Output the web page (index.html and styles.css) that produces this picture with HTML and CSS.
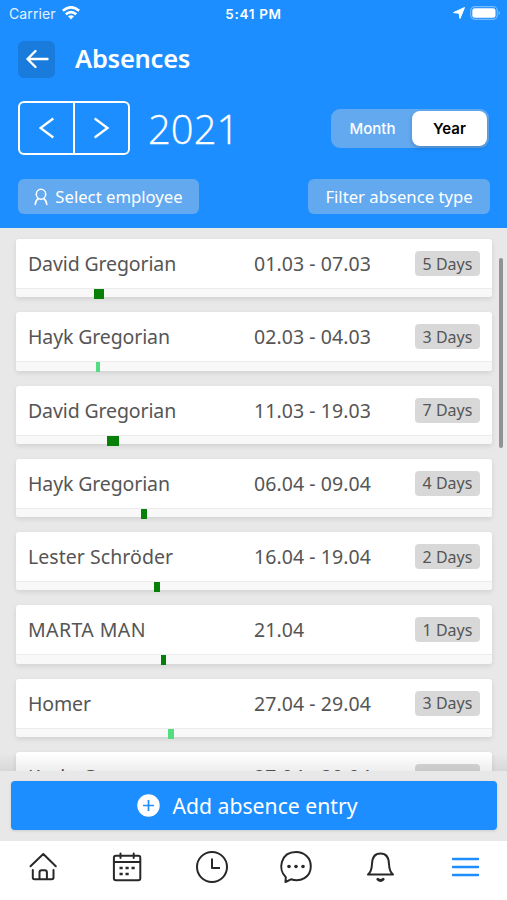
FILE: index.html
```
<!DOCTYPE html>
<html lang="en">
<head>
<meta charset="utf-8">
<title>Absences</title>
<link rel="stylesheet" href="styles.css">
</head>
<body>
<div class="app">
  <header class="header">
    <div class="status">
      <div class="status-left"><span class="carrier">Carrier</span>
        <svg width="18" height="14" viewBox="0 0 18 14" fill="none" stroke="#fff" stroke-width="2.700"><path d="M.8 4.800Q9-2.200 17.200 4.800M3.800 8.300Q9 3.900 14.200 8.300"/><path d="M6 10.300Q9 8 12 10.300L9 13.400Z" fill="#fff" stroke="none"/></svg>
      </div>
      <span class="time">5:41 PM</span>
      <div class="status-right">
        <svg width="12" height="12" viewBox="0 0 12 12"><path d="M11.500.5L7 11.500 6 6.200.5 5.600Z" fill="#fff" stroke="#fff" stroke-linejoin="round"/></svg>
        <svg width="31" height="14" viewBox="0 0 31 14"><rect x=".7" y=".7" width="26.600" height="12.600" rx="4" fill="none" stroke="#77b9ff" stroke-width="1.200"/><rect x="2.300" y="2.300" width="23.200" height="9.400" rx="2.500" fill="#fff"/><path d="M28.600 5q1.400.4 1.400 2t-1.400 2z" fill="#77b9ff"/></svg>
      </div>
    </div>
    <div class="title-row">
      <div class="back"><svg width="24" height="22" viewBox="0 0 24 22" fill="none" stroke="#fff" stroke-width="2.400" stroke-linecap="round" stroke-linejoin="round"><path d="M22.500 11H2.500M10.500 3L2.500 11l8 8"/></svg></div>
      <h1 class="title">Absences</h1>
    </div>
    <div class="period-row">
      <div class="stepper">
        <div class="step"><svg width="16" height="22" viewBox="0 0 16 22" fill="none" stroke="#fff" stroke-width="2.300"><path d="M14.300 1.500L1.500 11l12.800 9.500"/></svg></div>
        <div class="step"><svg width="16" height="22" viewBox="0 0 16 22" fill="none" stroke="#fff" stroke-width="2.300"><path d="M.7 1.500L13.500 11 .7 20.500"/></svg></div>
      </div>
      <span class="year">2021</span>
      <div class="segment"><span class="seg">Month</span><span class="seg seg-active">Year</span></div>
    </div>
    <div class="filter-row">
      <div class="chip chip-employee">
        <svg width="14" height="18" viewBox="0 0 14 18" fill="none" stroke="#fff" stroke-width="1.500" stroke-linecap="round"><ellipse cx="7" cy="6.200" rx="4.700" ry="5"/><path d="M1.200 16.500q.2-4.200 3.300-6M12.800 16.500q-.2-4.200-3.300-6"/></svg>
        <span class="chip-label">Select employee</span>
      </div>
      <div class="chip chip-type"><span class="chip-label">Filter absence type</span></div>
    </div>
  </header>

  <main class="list">
    <div class="card"><div class="entry"><span class="name">David Gregorian</span><span class="dates">01.03 - 07.03</span><span class="days">5 Days</span></div><div class="track"><i class="bar" style="margin-left:77.5px;width:10px"></i></div></div>
    <div class="card"><div class="entry"><span class="name">Hayk Gregorian</span><span class="dates">02.03 - 04.03</span><span class="days">3 Days</span></div><div class="track"><i class="bar bar-light" style="margin-left:79.5px;width:4.5px"></i></div></div>
    <div class="card"><div class="entry"><span class="name">David Gregorian</span><span class="dates">11.03 - 19.03</span><span class="days">7 Days</span></div><div class="track"><i class="bar" style="margin-left:91px;width:12px"></i></div></div>
    <div class="card"><div class="entry"><span class="name">Hayk Gregorian</span><span class="dates">06.04 - 09.04</span><span class="days">4 Days</span></div><div class="track"><i class="bar" style="margin-left:125px;width:5.5px"></i></div></div>
    <div class="card"><div class="entry"><span class="name name-wide">Lester Schröder</span><span class="dates">16.04 - 19.04</span><span class="days">2 Days</span></div><div class="track"><i class="bar" style="margin-left:138px;width:5.5px"></i></div></div>
    <div class="card"><div class="entry"><span class="name name-caps">MARTA MAN</span><span class="dates">21.04</span><span class="days">1 Days</span></div><div class="track"><i class="bar" style="margin-left:144.5px;width:5.5px"></i></div></div>
    <div class="card"><div class="entry"><span class="name">Homer</span><span class="dates">27.04 - 29.04</span><span class="days">3 Days</span></div><div class="track"><i class="bar bar-light" style="margin-left:152px;width:5.5px"></i></div></div>
    <div class="card"><div class="entry"><span class="name">Kevin G</span><span class="dates">27.04 - 30.04</span><span class="days">4 Days</span></div><div class="track"></div></div>
    <div class="scrollbar"></div>
    <div class="fade"></div>
  </main>

  <div class="action">
    <div class="add">
      <svg width="23" height="23" viewBox="0 0 23 23"><circle cx="11.500" cy="11.500" r="11.200" fill="#fff"/><path d="M11.500 6v11M6 11.500h11" stroke="#1c8eff" stroke-width="1.700"/></svg>
      <span class="add-label">Add absence entry</span>
    </div>
  </div>

  <nav class="tabs">
    <svg class="tab" width="34" height="34" viewBox="0 0 34 34"><path d="M4.500 16.200L17.300 4l12.500 12.200M6.800 20v7.500q0 1.800 1.700 1.800h17.300q1.700 0 1.700-1.800V20M13.500 29V22.500q0-2.300 2.200-2.300h3q2.200 0 2.200 2.300V29"/></svg>
    <svg class="tab" width="34" height="34" viewBox="0 0 34 34"><rect x="3.900" y="5.700" width="26.400" height="24.600" rx="2"/><path d="M4 12h26M10.500 3.500v4.500M23.700 3.500v4.500"/><path d="M9.500 18h3.200M15.500 18h3.200M21.500 18h3.200M9.500 24h3.200M15.500 24h3.200" stroke-linecap="butt" stroke-width="2.400"/></svg>
    <svg class="tab" width="34" height="34" viewBox="0 0 34 34"><circle cx="17" cy="17" r="15"/><path d="M17 8.500V18h8" stroke-linecap="butt"/></svg>
    <svg class="tab" width="34" height="34" viewBox="0 0 34 34"><path d="M6.800 27.200C-1.500 19.500 1.500 2 17 2c8.500 0 14.800 6 14.800 14.200 0 11-10.300 16.300-19.800 13.100L6.500 32Z"/><g class="dots"><circle cx="10" cy="16.500" r="1.800"/><circle cx="17" cy="16.500" r="1.800"/><circle cx="24" cy="16.500" r="1.800"/></g></svg>
    <svg class="tab" width="34" height="34" viewBox="0 0 34 34"><path d="M5 24.500h25q-3.700-3-4-10.500C25.800 7 23 3.500 17.500 3.500S9.200 7 9 14q-.3 7.500-4 10.500Z"/><path d="M14.800 29.300q2.700 2.600 5.400 0" stroke-width="2.800"/></svg>
    <svg class="tab tab-active" width="34" height="34" viewBox="0 0 34 34"><path d="M5 9h25M5 17h25M5 25h25"/></svg>
  </nav>
</div>
</body>
</html>
```
FILE: styles.css
```
* { box-sizing: border-box; }
body { margin: 0; font-family: "Noto Sans", "Open Sans", sans-serif; }
svg { display: block; flex: none; }
span { white-space: nowrap; }
.app { width: 507px; height: 900px; display: flex; flex-direction: column; overflow: hidden; background: #e8e8e8; }

.header { height: 228px; flex: none; background: #1c8eff; color: #fff; padding: 0 18px; }
.status { height: 28px; margin: 0 -9px; display: grid; grid-template-columns: 1fr auto 1fr; align-items: center; font-family: Inter, sans-serif; font-size: 14px; }
.status-left { display: flex; align-items: center; gap: 6px; margin-top: -2px; }
.carrier { letter-spacing: 0.100px; color: #e6f2ff; }
.time { font-weight: 600; font-size: 13.500px; letter-spacing: 0.700px; }
.status-right { display: flex; align-items: center; justify-content: flex-end; gap: 5px; margin: -2px -3px 0 0; }

.title-row { display: flex; align-items: center; height: 38px; margin-top: 12px; }
.back { width: 37px; height: 37px; border-radius: 6px; background: #197bdb; display: flex; align-items: center; justify-content: center; }
.title { margin: -2px 0 0 20px; font-size: 25.500px; font-weight: 600; line-height: 38px; letter-spacing: -0.250px; }

.period-row { display: flex; align-items: center; margin-top: 23px; height: 54px; }
.stepper { width: 112px; height: 54px; display: flex; border: 2px solid #fff; border-radius: 6px; }
.step { flex: 1; display: flex; align-items: center; justify-content: center; }
.step + .step { border-left: 2px solid #fff; }
.year { margin: 2px 0 0 18px; font-family: "Open Sans", sans-serif; font-size: 40px; font-weight: 300; line-height: 54px; -webkit-text-stroke: 0.300px #fff; }
.segment { margin-left: auto; width: 158px; height: 39px; border-radius: 9px; background: #62a9f0; display: flex; padding: 2px; font-family: Inter, sans-serif; font-size: 15px; font-weight: 500; }
.seg { width: 79px; display: flex; align-items: center; justify-content: center; }
.seg-active { width: 75px; color: #000; font-weight: 600; background: #fff; border-radius: 8px; box-shadow: 0 2px 4px rgba(0,0,0,.2); }

.filter-row { display: flex; justify-content: space-between; margin: 24px -1px 0 0; }
.chip { height: 35px; border-radius: 6px; background: #62a9f0; display: flex; align-items: center; justify-content: center; font-size: 16.700px; }
.chip-employee { width: 181px; gap: 7px; }
.chip-type { width: 182px; }

.list { position: relative; height: 543px; flex: none; padding: 11px 15px 0 16px; overflow: hidden; }
.card { height: 58.300px; margin-bottom: 15px; border-radius: 3px; background: #fff; box-shadow: 0 2px 5px rgba(0,0,0,.1); color: #555; }
.entry { height: 49px; padding: 0 12px; display: flex; align-items: center; font-size: 19.500px; }
.name { width: 226px; letter-spacing: -0.120px; }
.name-wide { letter-spacing: 0.050px; }
.name-caps { letter-spacing: 0.400px; }
.dates { flex: 1; letter-spacing: 0.060px; }
.days { width: 65px; height: 25px; border-radius: 4px; background: #d8d8d8; display: flex; align-items: center; justify-content: center; font-size: 16px; }
.track { height: 9.300px; border-top: 1px solid #ececec; background: #f8f8f8; border-radius: 0 0 3px 3px; }
.bar { display: block; height: 10px; background: #078007; }
.bar-light { background: #53dc80; }
.scrollbar { position: absolute; left: 499px; top: 30px; width: 4px; height: 190px; border-radius: 2px; background: #929292; }
.fade { position: absolute; left: 0; right: 0; bottom: 0; height: 18px; background: linear-gradient(rgba(0,0,0,0), rgba(0,0,0,.07)); }

.action { height: 70px; flex: none; padding: 10px 10px 11px 11px; }
.add { height: 49px; border-radius: 4px; background: #1c8eff; color: #fff; display: flex; align-items: center; justify-content: center; gap: 12px; padding-right: 13px; font-size: 21.200px; box-shadow: 0 1px 3px rgba(0,0,0,.12); }

.tabs { height: 59px; flex: none; background: #fff; display: grid; grid-template-columns: repeat(6, 1fr); justify-items: center; padding: 9px 0 0 1px; }
.tab { fill: none; stroke: #282828; stroke-width: 2; stroke-linecap: round; stroke-linejoin: round; }
.tab-active { stroke: #1c8eff; stroke-width: 2.400; }
.dots { fill: #282828; stroke: none; }
```
